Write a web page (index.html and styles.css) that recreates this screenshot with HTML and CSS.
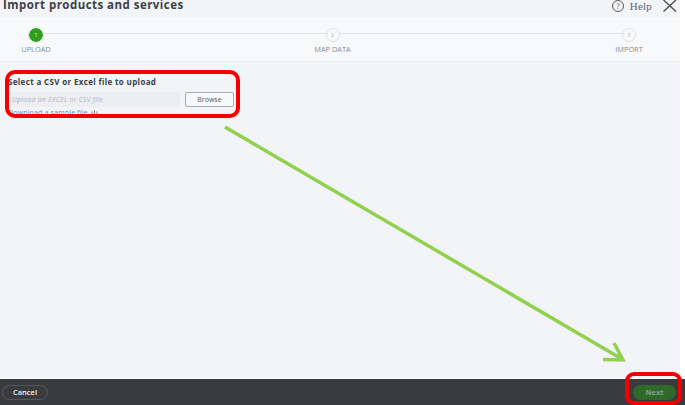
FILE: index.html
```html
<!DOCTYPE html>
<html lang="en">
<head>
<meta charset="utf-8">
<title>Import products and services</title>
<link rel="stylesheet" href="styles.css">
</head>
<body>
<div class="page">
  <div class="panel">
    <header class="header">
      <h1 class="title">Import products and services</h1>
      <div class="tools">
        <svg class="help-icon" width="14" height="12" viewBox="0 0 14 12"><circle cx="7" cy="6" r="5.500" fill="none" stroke="#55585e" stroke-width="1"/><text x="7" y="9" text-anchor="middle" class="help-q">?</text></svg>
        <span class="help">Help</span>
        <svg class="close" width="14" height="12" viewBox="0 0 14 12"><path d="M0.500 0 L13 11.500 M13 0 L0.500 11.500" stroke="#45484e" stroke-width="1.300" fill="none"/></svg>
      </div>
    </header>
    <section class="stepper">
      <div class="step">
        <span class="dot dot-on">1</span>
        <span class="label">UPLOAD</span>
      </div>
      <div class="step">
        <span class="dot">2</span>
        <span class="label">MAP DATA</span>
      </div>
      <div class="step">
        <span class="dot">3</span>
        <span class="label">IMPORT</span>
      </div>
    </section>
    <main class="content">
      <h2 class="upload-title">Select a CSV or Excel file to upload</h2>
      <div class="upload-row">
        <div class="file-input">Upload an EXCEL or CSV file</div>
        <button class="browse">Browse</button>
      </div>
      <div class="sample"><a class="sample-link">Download a sample file</a>
        <svg class="sample-icon" width="7" height="7" viewBox="0 0 7 7"><path d="M1.200 1.500 A2.600 2.600 0 1 0 5.800 1.500 M3.500 0.500 V5 M2.200 3.800 L3.500 5.200 L4.800 3.800" fill="none" stroke="#666" stroke-width="0.800"/></svg>
      </div>
    </main>
  </div>
  <footer class="footer">
    <button class="cancel">Cancel</button>
    <button class="next">Next</button>
  </footer>
  <div class="mark mark-upload"></div>
  <div class="mark mark-next"></div>
  <svg class="arrow" width="685" height="405" viewBox="0 0 685 405"><path d="M225 127 L622 359 M603 359.500 L623 360 L614 343" fill="none" stroke="#92d050" stroke-width="3.500"/></svg>
</div>
</body>
</html>
```
FILE: styles.css
```css
* { box-sizing: border-box; }
html, body { margin: 0; padding: 0; }
body { font-family: "Open Sans", "Liberation Sans", sans-serif; background: #fff; }
.page { position: relative; width: 685px; height: 405px; overflow: hidden; display: flex; flex-direction: column; }
.panel { width: 680px; height: 378px; background: #f3f4f8; display: flex; flex-direction: column; flex: none; }
.header { height: 17px; display: flex; justify-content: space-between; align-items: flex-start; flex: none; padding: 0 3px 0 3px; }
.title { margin: 0; font-size: 11.500px; line-height: 9px; font-weight: 700; color: #3c3f45; letter-spacing: 0.46px; white-space: nowrap; }
.tools { display: flex; align-items: flex-start; }
.help { font-family: "Liberation Serif", serif; font-size: 11px; line-height: 12px; color: #5f6268; margin-left: 5px; letter-spacing: 0.2px; }
.help-q { font-family: "Liberation Serif", serif; font-size: 8.500px; fill: #55585e; }
.close { margin-left: 11px; }
.stepper { height: 45px; flex: none; background: #f8f9fb; border-bottom: 1px solid #f0f1f4; display: flex; justify-content: space-between; padding: 11px 36px 0 21px; background-image: linear-gradient(#e1e3e6, #e1e3e6); background-size: 590px 1px; background-position: 43px 16px; background-repeat: no-repeat; }
.step { width: 30px; display: flex; flex-direction: column; align-items: center; gap: 2px; }
.dot { width: 14px; height: 14px; border-radius: 50%; background: #f8f9fb; border: 1px solid #dfe1e5; font-size: 6px; line-height: 12px; text-align: center; color: #b5b7bb; flex: none; }
.dot-on { background: #2ca01c; border: 1px solid #2ca01c; outline: 1px solid #dfe5de; color: #dff3da; }
.label { font-size: 7.400px; line-height: 10px; color: #8a8d92; white-space: nowrap; }
.content { padding: 14px 8px 0; flex: 1; }
.upload-title { margin: 0; font-size: 8px; line-height: 12px; font-weight: 700; color: #3d4046; letter-spacing: 0.35px; white-space: nowrap; }
.upload-row { display: flex; align-items: center; gap: 5px; margin-top: 4px; }
.file-input { width: 172px; height: 15px; background: #eceef1; font-size: 6.800px; line-height: 15px; font-style: italic; color: #b3b5ba; padding-left: 4px; letter-spacing: 0.3px; }
.browse { width: 49px; height: 15px; padding: 0; background: #f7f8fa; border: 1px solid #a9acb0; border-radius: 2px; font-family: inherit; font-size: 7px; line-height: 13px; color: #55585e; }
.sample { display: flex; align-items: center; gap: 3px; margin-top: 0; height: 12px; }
.sample-link { font-size: 7px; line-height: 12px; color: #3a9bd4; letter-spacing: 0.17px; white-space: nowrap; }
.footer { flex: none; height: 26px; margin-top: 1px; background: #3a3b3f; display: flex; justify-content: space-between; align-items: center; padding: 0 9px 0 2px; }
.cancel { width: 46px; height: 15px; padding: 0; background: transparent; border: 1px solid #55565a; border-radius: 8px; font-family: inherit; font-size: 7.500px; font-weight: 600; line-height: 13px; color: #f2f2f2; }
.next { width: 43px; height: 15px; padding: 0; background: #2f6a2c; border: 0; border-radius: 8px; font-family: inherit; font-size: 7.500px; font-weight: 700; line-height: 15px; color: #86a084; }
.mark { position: absolute; border: 4.500px solid #f50000; }
.mark-upload { left: 5px; top: 70px; width: 235px; height: 48px; border-radius: 10px; }
.mark-next { left: 625px; top: 372px; width: 57px; height: 33px; border-radius: 9px; }
.arrow { position: absolute; left: 0; top: 0; pointer-events: none; }
```
